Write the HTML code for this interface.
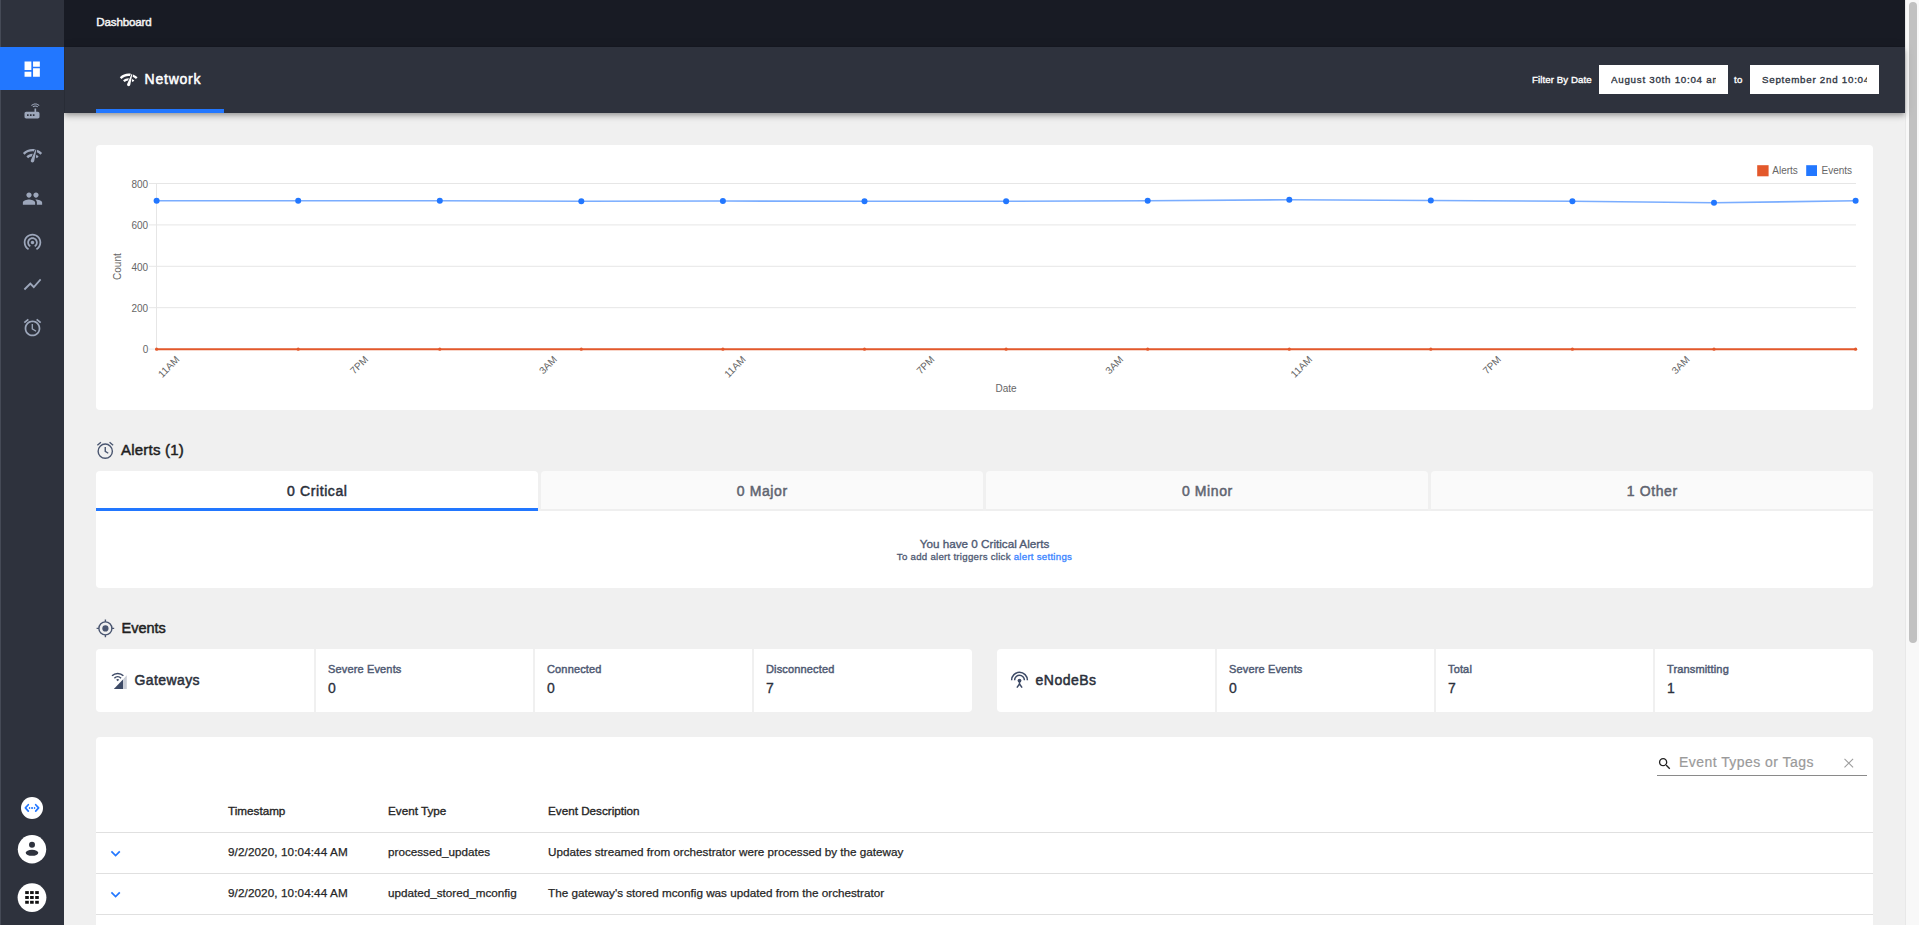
<!DOCTYPE html>
<html><head><meta charset="utf-8">
<style>
*{box-sizing:border-box;margin:0;padding:0}
html,body{width:1919px;height:925px;overflow:hidden;background:#f0f0f0;font-family:"Liberation Sans",sans-serif}
.abs{position:absolute}
#sidebar{position:absolute;left:0;top:0;width:64px;height:925px;background:#2e323d;z-index:5}
#sidebar .top{position:absolute;left:0;top:0;width:64px;height:47px;background:#2e323d}
#sidebar .edge{position:absolute;left:0;top:0;width:1px;height:925px;background:#454a56}
.navitem{position:absolute;left:0;width:64px;height:43px}
.navitem svg{position:absolute;left:21.5px;top:12px;width:21px;height:21px;fill:#9da7bb}
#topbar{position:absolute;left:64px;top:0;width:1841px;height:47px;background:#181b24}
#tabbar{position:absolute;left:64px;top:47px;width:1841px;height:66px;background:#2e323d;box-shadow:0px 2px 4px -1px rgba(0,0,0,0.2),0px 4px 5px 0px rgba(0,0,0,0.14),0px 1px 10px 0px rgba(0,0,0,0.12);z-index:2}
.card{position:absolute;background:#fff;border-radius:4px}
#scroll{position:absolute;left:1905px;top:0;width:14px;height:925px;background:#f8f8f8;border-left:1px solid #e8e8e8}
#thumb{position:absolute;left:1909px;top:2px;width:8px;height:641px;background:#c1c1c1;border-radius:4px}
</style></head>
<body>
<div id="sidebar">
  <div class="top"></div>
  <div class="edge"></div>
  <div class="navitem" style="top:47px;background:#2277ff">
    <svg viewBox="0 0 24 24" style="fill:#fff;left:21.9px;top:11.6px;width:20.4px;height:20.4px"><path d="M3 13h8V3H3v10zm0 8h8v-6H3v6zm10 0h8V11h-8v10zm0-18v6h8V3h-8z"/></svg>
  </div>
  <div class="navitem" style="top:90px"><svg viewBox="0 0 24 24" style="left:22px;top:11px;width:20px;height:20px"><path d="M20.2 5.9l.8-.8C19.6 3.7 17.8 3 16 3s-3.6.7-5 2.1l.8.8C13 4.8 14.5 4.2 16 4.2s3 .6 4.2 1.7zm-.9.8c-.9-.9-2.1-1.4-3.3-1.4s-2.4.5-3.3 1.4l.8.8c.7-.7 1.6-1 2.5-1 .9 0 1.8.3 2.5 1l.8-.8zM19 13h-2V9h-2v4H5c-1.1 0-2 .9-2 2v4c0 1.1.9 2 2 2h14c1.1 0 2-.9 2-2v-4c0-1.1-.9-2-2-2zM8 18H6v-2h2v2zm3.5 0h-2v-2h2v2zm3.5 0h-2v-2h2v2z"/></svg></div>
  <div class="navitem" style="top:133px"><svg viewBox="0 0 24 24"><path d="M15.9 5c-.17 0-.32.09-.41.23l-.07.15-5.18 11.65c-.16.29-.26.61-.26.96 0 1.11.9 2.01 2.01 2.01.96 0 1.77-.68 1.96-1.59l.01-.03L16.4 5.5c0-.28-.22-.5-.5-.5zM1 9l2 2c2.88-2.88 6.790-4.08 10.53-3.62l1.19-2.68C9.89 3.84 4.74 5.27 1 9zm20 2l2-2c-1.64-1.640-3.55-2.82-5.59-3.57l-.53 2.82c1.5.62 2.9 1.53 4.12 2.75zm-4 4l2-2c-.8-.8-1.7-1.42-2.66-1.89l-.55 2.92c.42.27.83.59 1.21.97zM5 13l2 2c1.13-1.13 2.56-1.79 4.03-2l1.28-2.88c-2.63-.08-5.3.87-7.31 2.88z"/></svg></div>
  <div class="navitem" style="top:176px"><svg viewBox="0 0 24 24"><path d="M16 11c1.66 0 2.99-1.34 2.99-3S17.66 5 16 5c-1.66 0-3 1.34-3 3s1.34 3 3 3zm-8 0c1.66 0 2.99-1.34 2.99-3S9.66 5 8 5C6.34 5 5 6.34 5 8s1.34 3 3 3zm0 2c-2.33 0-7 1.17-7 3.5V19h14v-2.5c0-2.33-4.67-3.5-7-3.5zm8 0c-.29 0-.62.02-.97.05 1.16.84 1.970 1.97 1.97 3.45V19h6v-2.5c0-2.33-4.67-3.5-7-3.5z"/></svg></div>
  <div class="navitem" style="top:219px"><svg viewBox="0 0 24 24"><path d="M12 11c-1.1 0-2 .9-2 2s.9 2 2 2 2-.9 2-2-.9-2-2-2zm6 2c0-3.31-2.69-6-6-6s-6 2.69-6 6c0 2.22 1.21 4.15 3 5.19l1-1.74c-1.19-.7-2-1.97-2-3.45 0-2.21 1.79-4 4-4s4 1.79 4 4c0 1.48-.81 2.75-2 3.45l1 1.74c1.79-1.04 3-2.97 3-5.19zM12 3C6.48 3 2 7.48 2 13c0 3.7 2.01 6.92 4.99 8.65l1-1.73C5.61 18.530 4 15.96 4 13c0-4.42 3.58-8 8-8s8 3.58 8 8c0 2.96-1.61 5.53-4 6.92l1 1.73c2.99-1.73 5-4.95 5-8.65 0-5.52-4.48-10-10-10z"/></svg></div>
  <div class="navitem" style="top:262px"><svg viewBox="0 0 24 24"><path d="M3.5 18.49l6-6.01 4 4L22 6.92l-1.41-1.41-7.09 7.97-4-4L2 16.99z"/></svg></div>
  <div class="navitem" style="top:305px"><svg viewBox="0 0 24 24"><path d="M22 5.72l-4.6-3.86-1.29 1.53 4.6 3.86L22 5.72zM7.88 3.39L6.6 1.86 2 5.71l1.29 1.53 4.59-3.850zM12.5 8H11v6l4.75 2.85.75-1.23-4-2.37V8zM12 4c-4.97 0-9 4.03-9 9s4.02 9 9 9c4.97 0 9-4.03 9-9s-4.03-9-9-9zm0 16c-3.87 0-7-3.13-7-7s3.13-7 7-7 7 3.13 7 7-3.13 7-7 7z"/></svg></div>
  <svg class="abs" style="left:0;top:780px" width="64" height="145" viewBox="0 780 64 145">
    <circle cx="32" cy="808" r="11" fill="#fff"/>
    <g fill="none" stroke="#2277ff" stroke-width="1.7" stroke-linecap="round" stroke-linejoin="round"><path d="M28.3 804.7L25.4 807.9L28.3 811.1M35.7 804.7L38.6 807.9L35.7 811.1"/></g><g fill="#2277ff"><rect x="28.9" y="807.1" width="1.3" height="1.8"/><rect x="31.2" y="807.1" width="1.7" height="1.8"/><rect x="33.9" y="807.1" width="1.3" height="1.8"/></g>
    <circle cx="32" cy="849.3" r="14.2" fill="#fff"/>
    <circle cx="32" cy="844.7" r="3" fill="#2e323d"/>
    <ellipse cx="32" cy="852.8" rx="6.3" ry="3" fill="#2e323d"/>
    <circle cx="32" cy="897.6" r="14.4" fill="#fff"/>
    <g fill="#111"><rect x="25.2" y="891.1" width="3.6" height="2.95"/><rect x="30.1" y="891.1" width="3.6" height="2.95"/><rect x="35.2" y="891.1" width="3.6" height="2.95"/><rect x="25.2" y="896" width="3.6" height="2.95"/><rect x="30.1" y="896" width="3.6" height="2.95"/><rect x="35.2" y="896" width="3.6" height="2.95"/><rect x="25.2" y="900.8" width="3.6" height="2.95"/><rect x="30.1" y="900.8" width="3.6" height="2.95"/><rect x="35.2" y="900.8" width="3.6" height="2.95"/></g>
  </svg>
</div>
<div id="topbar"><div class="abs" style="left:32.3px;top:14.9px;font-size:11.6px;color:#f4f4f4;letter-spacing:-0.16px;-webkit-text-stroke:0.45px #f4f4f4">Dashboard</div></div>
<div id="tabbar">
  <svg class="abs" viewBox="0 0 24 24" style="left:55.2px;top:22.6px;width:19.4px;height:19.4px;fill:#fff"><path d="M15.9 5c-.17 0-.32.09-.41.23l-.07.15-5.18 11.65c-.16.29-.26.61-.26.96 0 1.11.9 2.01 2.01 2.01.96 0 1.77-.68 1.96-1.59l.01-.03L16.4 5.5c0-.28-.22-.5-.5-.5zM1 9l2 2c2.88-2.88 6.790-4.08 10.53-3.62l1.19-2.68C9.89 3.84 4.74 5.27 1 9zm20 2l2-2c-1.64-1.640-3.55-2.82-5.59-3.57l-.53 2.82c1.5.62 2.9 1.53 4.12 2.75zm-4 4l2-2c-.8-.8-1.7-1.42-2.66-1.89l-.55 2.92c.42.27.83.59 1.21.97zM5 13l2 2c1.13-1.13 2.56-1.79 4.03-2l1.28-2.88c-2.63-.08-5.3.87-7.31 2.88z"/></svg>
  <div class="abs" style="left:80.6px;top:24px;font-size:14px;color:#fff;letter-spacing:0.75px;-webkit-text-stroke:0.5px #fff">Network</div>
  <div class="abs" style="left:32px;top:62px;width:128px;height:4px;background:#2277ff"></div>
  <div class="abs" style="left:1468px;top:27.4px;font-size:9.7px;color:#fff;letter-spacing:0.08px;-webkit-text-stroke:0.35px #fff">Filter By Date</div>
  <div class="abs" style="left:1535px;top:18px;width:129px;height:29px;background:#fff;overflow:hidden"><div class="abs" style="left:12px;top:9px;width:105px;overflow:hidden;white-space:nowrap;font-size:9.8px;color:#323845;letter-spacing:0.72px;-webkit-text-stroke:0.35px #323845">August 30th 10:04 am</div></div>
  <div class="abs" style="left:1670px;top:27.4px;font-size:9.7px;color:#fff;letter-spacing:0.3px;-webkit-text-stroke:0.35px #fff">to</div>
  <div class="abs" style="left:1686px;top:18px;width:129px;height:29px;background:#fff;overflow:hidden"><div class="abs" style="left:12px;top:9px;width:105px;overflow:hidden;white-space:nowrap;font-size:9.8px;color:#323845;letter-spacing:0.72px;-webkit-text-stroke:0.35px #323845">September 2nd 10:04 am</div></div>
</div>
<div class="card" style="left:96px;top:145px;width:1777px;height:265px"></div>
<svg class="abs" style="left:96px;top:145px" width="1777" height="265" viewBox="96 145 1777 265" font-family="Liberation Sans, sans-serif">
<line x1="149" y1="183.5" x2="1856" y2="183.5" stroke="#e6e6e6" stroke-width="1"/>
<text x="148.2" y="187.7" font-size="10" fill="#666" text-anchor="end">800</text>
<line x1="149" y1="224.9" x2="1856" y2="224.9" stroke="#e6e6e6" stroke-width="1"/>
<text x="148.2" y="229.1" font-size="10" fill="#666" text-anchor="end">600</text>
<line x1="149" y1="266.3" x2="1856" y2="266.3" stroke="#e6e6e6" stroke-width="1"/>
<text x="148.2" y="270.5" font-size="10" fill="#666" text-anchor="end">400</text>
<line x1="149" y1="307.7" x2="1856" y2="307.7" stroke="#e6e6e6" stroke-width="1"/>
<text x="148.2" y="311.9" font-size="10" fill="#666" text-anchor="end">200</text>
<line x1="149" y1="349.1" x2="1856" y2="349.1" stroke="#e6e6e6" stroke-width="1"/>
<text x="148.2" y="353.3" font-size="10" fill="#666" text-anchor="end">0</text>
<line x1="156.5" y1="183" x2="156.5" y2="350" stroke="#e6e6e6" stroke-width="1"/>
<text transform="translate(180.1,360.2) rotate(-45)" font-size="10" fill="#666" text-anchor="end">11AM</text>
<text transform="translate(368.9,360.2) rotate(-45)" font-size="10" fill="#666" text-anchor="end">7PM</text>
<text transform="translate(557.7,360.2) rotate(-45)" font-size="10" fill="#666" text-anchor="end">3AM</text>
<text transform="translate(746.4,360.2) rotate(-45)" font-size="10" fill="#666" text-anchor="end">11AM</text>
<text transform="translate(935.2,360.2) rotate(-45)" font-size="10" fill="#666" text-anchor="end">7PM</text>
<text transform="translate(1124.0,360.2) rotate(-45)" font-size="10" fill="#666" text-anchor="end">3AM</text>
<text transform="translate(1312.8,360.2) rotate(-45)" font-size="10" fill="#666" text-anchor="end">11AM</text>
<text transform="translate(1501.6,360.2) rotate(-45)" font-size="10" fill="#666" text-anchor="end">7PM</text>
<text transform="translate(1690.3,360.2) rotate(-45)" font-size="10" fill="#666" text-anchor="end">3AM</text>
<text x="1006" y="391.8" font-size="10" fill="#666" text-anchor="middle">Date</text>
<text transform="translate(121.2,266.6) rotate(-90)" font-size="10" fill="#666" text-anchor="middle">Count</text>
<line x1="156.6" y1="349.2" x2="1855.6" y2="349.2" stroke="#e3582b" stroke-width="2"/>
<circle cx="156.6" cy="349.2" r="1.6" fill="#e3582b"/>
<circle cx="298.2" cy="349.2" r="1.6" fill="#e3582b"/>
<circle cx="439.8" cy="349.2" r="1.6" fill="#e3582b"/>
<circle cx="581.3" cy="349.2" r="1.6" fill="#e3582b"/>
<circle cx="722.9" cy="349.2" r="1.6" fill="#e3582b"/>
<circle cx="864.5" cy="349.2" r="1.6" fill="#e3582b"/>
<circle cx="1006.1" cy="349.2" r="1.6" fill="#e3582b"/>
<circle cx="1147.7" cy="349.2" r="1.6" fill="#e3582b"/>
<circle cx="1289.3" cy="349.2" r="1.6" fill="#e3582b"/>
<circle cx="1430.8" cy="349.2" r="1.6" fill="#e3582b"/>
<circle cx="1572.4" cy="349.2" r="1.6" fill="#e3582b"/>
<circle cx="1714.0" cy="349.2" r="1.6" fill="#e3582b"/>
<circle cx="1855.6" cy="349.2" r="1.6" fill="#e3582b"/>
<polyline points="156.6,200.7 298.2,200.7 439.8,200.7 581.3,201.3 722.9,201.0 864.5,201.3 1006.1,201.3 1147.7,200.8 1289.3,199.7 1430.8,200.5 1572.4,201.2 1714.0,202.8 1855.6,200.8" fill="none" stroke="#2277ff" stroke-opacity="0.6" stroke-width="1.6"/>
<circle cx="156.6" cy="200.7" r="3" fill="#2277ff"/>
<circle cx="298.2" cy="200.7" r="3" fill="#2277ff"/>
<circle cx="439.8" cy="200.7" r="3" fill="#2277ff"/>
<circle cx="581.3" cy="201.3" r="3" fill="#2277ff"/>
<circle cx="722.9" cy="201.0" r="3" fill="#2277ff"/>
<circle cx="864.5" cy="201.3" r="3" fill="#2277ff"/>
<circle cx="1006.1" cy="201.3" r="3" fill="#2277ff"/>
<circle cx="1147.7" cy="200.8" r="3" fill="#2277ff"/>
<circle cx="1289.3" cy="199.7" r="3" fill="#2277ff"/>
<circle cx="1430.8" cy="200.5" r="3" fill="#2277ff"/>
<circle cx="1572.4" cy="201.2" r="3" fill="#2277ff"/>
<circle cx="1714.0" cy="202.8" r="3" fill="#2277ff"/>
<circle cx="1855.6" cy="200.8" r="3" fill="#2277ff"/>
<rect x="1757.2" y="165.2" width="11.4" height="11.1" fill="#e3582b"/>
<text x="1772.3" y="173.8" font-size="10" fill="#666">Alerts</text>
<rect x="1806.2" y="165.2" width="10.8" height="10.8" fill="#2277ff"/>
<text x="1821.5" y="173.8" font-size="10" fill="#666">Events</text>
</svg>
<svg class="abs" viewBox="0 0 24 24" style="left:94.3px;top:439.3px;width:22.5px;height:22.5px"><g fill="none" stroke="#4a5670" stroke-width="1.5"><circle cx="12" cy="13" r="7.6"/><path d="M12 8.6v4.6l3.2 2"/><path d="M3.6 6.6l3.8-3.1M20.4 6.6l-3.8-3.1"/></g></svg>
<div class="abs" style="left:121px;top:441.2px;font-size:15px;color:#1f1f1f;line-height:17px;letter-spacing:0.22px;-webkit-text-stroke:0.5px #1f1f1f">Alerts (1)</div>
<div class="abs" style="left:96px;top:471px;width:442.1px;height:40px;background:#fff;border-radius:4px 4px 0 0"></div>
<div class="abs" style="left:96px;top:483px;width:442.1px;text-align:center;font-size:14px;color:#2b303b;line-height:17px;letter-spacing:0.6px;text-indent:0.6px;-webkit-text-stroke:0.5px #2b303b">0 Critical</div>
<div class="abs" style="left:96px;top:508px;width:442.1px;height:3px;background:#2277ff"></div>
<div class="abs" style="left:540.6px;top:471px;width:442.7px;height:40px;background:#fafafa;border-radius:4px 4px 0 0"></div>
<div class="abs" style="left:540.6px;top:483px;width:442.7px;text-align:center;font-size:14px;color:#5f6470;line-height:17px;letter-spacing:0.6px;text-indent:0.6px;-webkit-text-stroke:0.5px #5f6470">0 Major</div>
<div class="abs" style="left:540.6px;top:509px;width:442.7px;height:2px;background:#efefef"></div>
<div class="abs" style="left:985.8px;top:471px;width:442.7px;height:40px;background:#fafafa;border-radius:4px 4px 0 0"></div>
<div class="abs" style="left:985.8px;top:483px;width:442.7px;text-align:center;font-size:14px;color:#5f6470;line-height:17px;letter-spacing:0.6px;text-indent:0.6px;-webkit-text-stroke:0.5px #5f6470">0 Minor</div>
<div class="abs" style="left:985.8px;top:509px;width:442.7px;height:2px;background:#efefef"></div>
<div class="abs" style="left:1431px;top:471px;width:442.0px;height:40px;background:#fafafa;border-radius:4px 4px 0 0"></div>
<div class="abs" style="left:1431px;top:483px;width:442.0px;text-align:center;font-size:14px;color:#5f6470;line-height:17px;letter-spacing:0.6px;text-indent:0.6px;-webkit-text-stroke:0.5px #5f6470">1 Other</div>
<div class="abs" style="left:1431px;top:509px;width:442.0px;height:2px;background:#efefef"></div>
<div class="abs" style="left:96px;top:511px;width:1777px;height:77px;background:#fff;border-radius:0 0 4px 4px"></div>
<div class="abs" style="left:96px;top:537.3px;width:1777px;text-align:center;font-size:11.7px;color:#4f5a73;line-height:13px;-webkit-text-stroke:0.35px #4f5a73">You have 0 Critical Alerts</div>
<div class="abs" style="left:96px;top:551.2px;width:1777px;text-align:center;font-size:9.7px;color:#4f5a73;line-height:11px;letter-spacing:0.25px;-webkit-text-stroke:0.3px #4f5a73">To add alert triggers click <span style="color:#3984ff;-webkit-text-stroke:0.3px #3984ff">alert settings</span></div>
<svg class="abs" style="left:96px;top:619px" width="19" height="19" viewBox="0 0 19 19"><g fill="none" stroke="#4a5670" stroke-width="1.4"><circle cx="9.4" cy="9.4" r="6.5"/><path d="M9.4 0.6v2.4M9.4 15.8v2.4M0.6 9.4h2.4M15.8 9.4h2.4"/></g><circle cx="9.4" cy="9.4" r="3.1" fill="#4a5670"/></svg>
<div class="abs" style="left:121.5px;top:620px;font-size:14.5px;color:#1f1f1f;line-height:17px;letter-spacing:0px;-webkit-text-stroke:0.5px #1f1f1f">Events</div>
<div class="card" style="left:96px;top:649px;width:876px;height:63px"></div>
<div class="abs" style="left:314px;top:649px;width:2px;height:63px;background:#f0f0f0"></div>
<div class="abs" style="left:533px;top:649px;width:2px;height:63px;background:#f0f0f0"></div>
<div class="abs" style="left:752px;top:649px;width:2px;height:63px;background:#f0f0f0"></div>
<svg class="abs" style="left:108px;top:668px" width="22" height="24" viewBox="108 668 22 24"><g fill="none" stroke="#3d4a66" stroke-width="1.5"><path d="M112.04 675.84a8 8 0 0 1 11.32 0"/><path d="M114.38 678.18a4.7 4.7 0 0 1 6.64 0"/></g><path d="M117.7 681.3L116.2 679.8a2.1 2.1 0 0 1 3 0z" fill="#3d4a66"/><path d="M113.8 689L123.2 679.3V689z" fill="#3d4a66"/><path d="M123.2 679.3L126.8 675.2V689H123.2z" fill="#c9cdd6"/></svg>
<div class="abs" style="left:134.5px;top:672px;font-size:14px;color:#2b303b;line-height:17px;letter-spacing:0.4px;-webkit-text-stroke:0.5px #2b303b">Gateways</div>
<div class="abs" style="left:328px;top:663px;font-size:11px;color:#4f5a73;line-height:12px;letter-spacing:0.15px;margin-top:-0.4px;-webkit-text-stroke:0.45px #4f5a73">Severe Events</div>
<div class="abs" style="left:328px;top:680px;font-size:14px;color:#2b303b;line-height:16px;-webkit-text-stroke:0.3px #2b303b">0</div>
<div class="abs" style="left:547px;top:663px;font-size:11px;color:#4f5a73;line-height:12px;letter-spacing:0.15px;margin-top:-0.4px;-webkit-text-stroke:0.45px #4f5a73">Connected</div>
<div class="abs" style="left:547px;top:680px;font-size:14px;color:#2b303b;line-height:16px;-webkit-text-stroke:0.3px #2b303b">0</div>
<div class="abs" style="left:766px;top:663px;font-size:11px;color:#4f5a73;line-height:12px;letter-spacing:0.15px;margin-top:-0.4px;-webkit-text-stroke:0.45px #4f5a73">Disconnected</div>
<div class="abs" style="left:766px;top:680px;font-size:14px;color:#2b303b;line-height:16px;-webkit-text-stroke:0.3px #2b303b">7</div>
<div class="card" style="left:997px;top:649px;width:876px;height:63px"></div>
<div class="abs" style="left:1215px;top:649px;width:2px;height:63px;background:#f0f0f0"></div>
<div class="abs" style="left:1434px;top:649px;width:2px;height:63px;background:#f0f0f0"></div>
<div class="abs" style="left:1653px;top:649px;width:2px;height:63px;background:#f0f0f0"></div>
<svg class="abs" style="left:1008px;top:668px" width="24" height="24" viewBox="1008 668 24 24"><g fill="none" stroke="#3d4a66" stroke-width="1.5"><path d="M1011.6 680.2a7.9 7.9 0 0 1 15.8 0"/><path d="M1014.6 680.2a4.9 4.9 0 0 1 9.8 0"/><path d="M1019.5 681v3.2M1019.5 684l-2.6 3.6M1019.5 684l2.6 3.6"/></g><circle cx="1019.5" cy="680.6" r="1.9" fill="#3d4a66"/></svg>
<div class="abs" style="left:1035.5px;top:672px;font-size:14px;color:#2b303b;line-height:17px;letter-spacing:0.5px;-webkit-text-stroke:0.5px #2b303b">eNodeBs</div>
<div class="abs" style="left:1229px;top:663px;font-size:11px;color:#4f5a73;line-height:12px;letter-spacing:0.15px;margin-top:-0.4px;-webkit-text-stroke:0.45px #4f5a73">Severe Events</div>
<div class="abs" style="left:1229px;top:680px;font-size:14px;color:#2b303b;line-height:16px;-webkit-text-stroke:0.3px #2b303b">0</div>
<div class="abs" style="left:1448px;top:663px;font-size:11px;color:#4f5a73;line-height:12px;letter-spacing:0.15px;margin-top:-0.4px;-webkit-text-stroke:0.45px #4f5a73">Total</div>
<div class="abs" style="left:1448px;top:680px;font-size:14px;color:#2b303b;line-height:16px;-webkit-text-stroke:0.3px #2b303b">7</div>
<div class="abs" style="left:1667px;top:663px;font-size:11px;color:#4f5a73;line-height:12px;letter-spacing:0.15px;margin-top:-0.4px;-webkit-text-stroke:0.45px #4f5a73">Transmitting</div>
<div class="abs" style="left:1667px;top:680px;font-size:14px;color:#2b303b;line-height:16px;-webkit-text-stroke:0.3px #2b303b">1</div>
<div class="card" style="left:96px;top:737px;width:1777px;height:200px;border-radius:4px 4px 0 0"></div>
<svg class="abs" viewBox="0 0 24 24" style="left:1656.9px;top:755.6px;width:15.5px;height:15.5px"><path fill="#222" d="M15.5 14h-.79l-.28-.27C15.41 12.59 16 11.11 16 9.5 16 5.91 13.09 3 9.5 3S3 5.91 3 9.5 5.91 16 9.5 16c1.61 0 3.090-.59 4.230-1.570l.27.28v.79l5 4.99L20.49 19l-4.99-5zm-6 0C7.01 14 5 11.99 5 9.5S7.01 5 9.5 5 14 7.01 14 9.5 11.99 14 9.5 14z"/></svg>
<div class="abs" style="left:1679px;top:754px;font-size:14px;color:#9a9a9a;line-height:16px;letter-spacing:0.45px;-webkit-text-stroke:0.2px #9a9a9a">Event Types or Tags</div>
<svg class="abs" style="left:1843px;top:757px" width="12" height="12" viewBox="0 0 12 12"><path d="M1.5 1.8l8.6 8.6M10.1 1.8l-8.6 8.6" stroke="#9e9e9e" stroke-width="1.1"/></svg>
<div class="abs" style="left:1657px;top:775px;width:210px;height:1px;background:#8a8a8a"></div>
<div class="abs" style="left:228px;top:804.3px;font-size:11.7px;color:#262626;line-height:13px;-webkit-text-stroke:0.35px #262626">Timestamp</div>
<div class="abs" style="left:388px;top:804.3px;font-size:11.7px;color:#262626;line-height:13px;-webkit-text-stroke:0.35px #262626">Event Type</div>
<div class="abs" style="left:548px;top:804.3px;font-size:11.7px;color:#262626;line-height:13px;-webkit-text-stroke:0.35px #262626">Event Description</div>
<div class="abs" style="left:96px;top:832px;width:1777px;height:1px;background:#e0e0e0"></div>
<div class="abs" style="left:96px;top:873px;width:1777px;height:1px;background:#e0e0e0"></div>
<div class="abs" style="left:96px;top:914px;width:1777px;height:1px;background:#e0e0e0"></div>
<svg class="abs" style="left:106px;top:845px" width="20" height="16" viewBox="0 0 20 16"><path d="M5.4 6.3l4.2 4.2 4.2-4.2" fill="none" stroke="#2277ff" stroke-width="1.7"/></svg>
<div class="abs" style="left:228px;top:845px;font-size:11.7px;color:#262626;line-height:13px;letter-spacing:0.1px;-webkit-text-stroke:0.25px #262626">9/2/2020, 10:04:44 AM</div>
<div class="abs" style="left:388px;top:845px;font-size:11.7px;color:#262626;line-height:13px;-webkit-text-stroke:0.25px #262626">processed_updates</div>
<div class="abs" style="left:548px;top:845px;font-size:11.7px;color:#262626;line-height:13px;-webkit-text-stroke:0.25px #262626">Updates streamed from orchestrator were processed by the gateway</div>
<svg class="abs" style="left:106px;top:886px" width="20" height="16" viewBox="0 0 20 16"><path d="M5.4 6.3l4.2 4.2 4.2-4.2" fill="none" stroke="#2277ff" stroke-width="1.7"/></svg>
<div class="abs" style="left:228px;top:886px;font-size:11.7px;color:#262626;line-height:13px;letter-spacing:0.1px;-webkit-text-stroke:0.25px #262626">9/2/2020, 10:04:44 AM</div>
<div class="abs" style="left:388px;top:886px;font-size:11.7px;color:#262626;line-height:13px;-webkit-text-stroke:0.25px #262626">updated_stored_mconfig</div>
<div class="abs" style="left:548px;top:886px;font-size:11.7px;color:#262626;line-height:13px;-webkit-text-stroke:0.25px #262626">The gateway's stored mconfig was updated from the orchestrator</div>
<div class="abs" style="left:64px;top:47px;width:1px;height:66px;background:#282c36;z-index:3"></div>
<div id="scroll"></div><div id="thumb"></div>
</body></html>
